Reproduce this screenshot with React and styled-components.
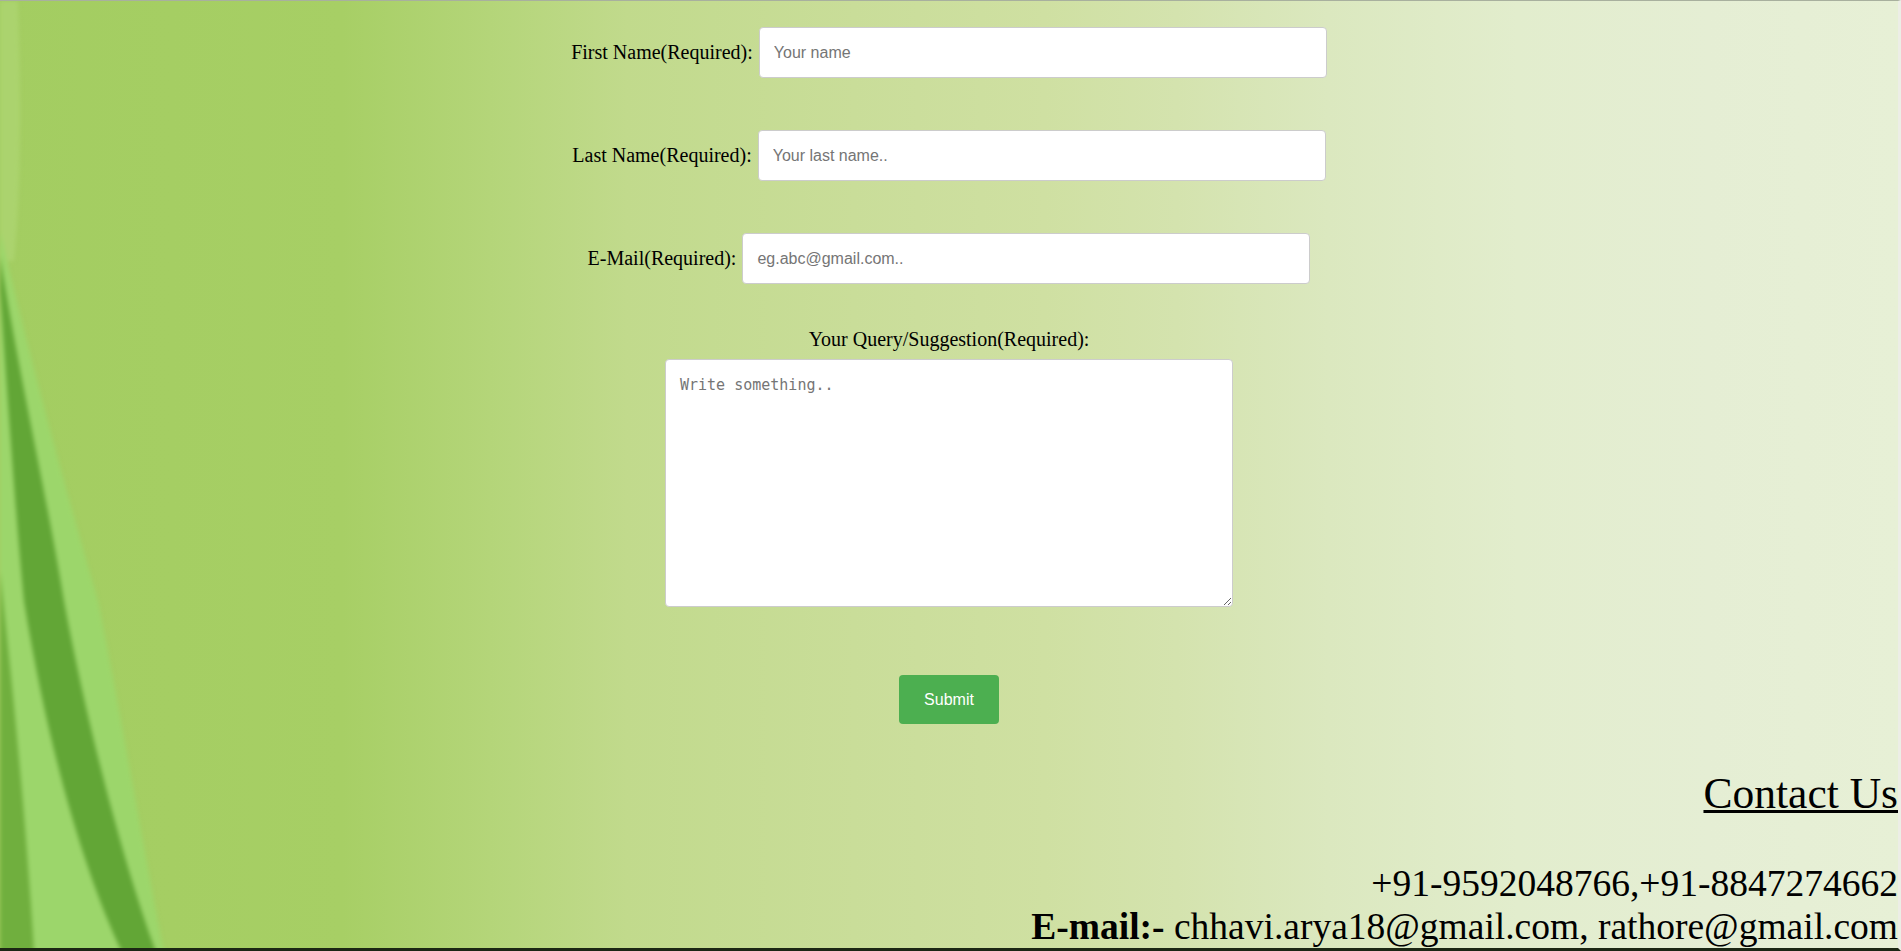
import React, { useState } from 'react';
import styled, { createGlobalStyle } from 'styled-components';

const GlobalStyle = createGlobalStyle`
  html,
  body {
    margin: 0;
    padding: 0;
  }
  body {
    font-family: 'Liberation Serif', 'Times New Roman', serif;
    color: #000;
    overflow: hidden;
  }
`;

const fields = [
  { name: 'firstname', label: 'First Name(Required):', placeholder: 'Your name' },
  { name: 'lastname', label: 'Last Name(Required):', placeholder: 'Your last name..' },
  { name: 'email', label: 'E-Mail(Required):', placeholder: 'eg.abc@gmail.com..' },
];

const Leaves = () => (
  <LeafArt width="220" height="951" viewBox="0 0 220 951" aria-hidden="true">
    <path d="M0,0 L18,0 C22,120 20,200 14,260 L0,260 Z" fill="#abd36e" />
    <path d="M0,230 C35,380 75,520 98,600 C122,720 142,840 164,951 L0,951 Z" fill="#9cd66b" />
    <path d="M0,570 C14,700 26,820 34,951 L0,951 Z" fill="#70af3e" />
    <path
      d="M0,290 C10,430 17,530 24,600 C50,760 88,880 122,951 L156,951 C126,870 88,730 64,600 C46,490 22,390 0,255 Z"
      fill="#62a636"
    />
  </LeafArt>
);

const App = () => {
  const [values, setValues] = useState({ firstname: '', lastname: '', email: '', message: '' });

  const handleChange = (e) => {
    setValues({ ...values, [e.target.name]: e.target.value });
  };

  return (
    <Page>
      <GlobalStyle />
      <Leaves />
      <Main>
        <Form onSubmit={(e) => e.preventDefault()}>
          <Fields>
            {fields.map((f) => (
              <Row key={f.name}>
                <Label htmlFor={f.name}>{f.label}</Label>
                <TextInput
                  type="text"
                  id={f.name}
                  name={f.name}
                  placeholder={f.placeholder}
                  value={values[f.name]}
                  onChange={handleChange}
                />
              </Row>
            ))}
          </Fields>
          <QueryLabel htmlFor="message">Your Query/Suggestion(Required):</QueryLabel>
          <Message
            id="message"
            name="message"
            placeholder="Write something.."
            value={values.message}
            onChange={handleChange}
          />
          <Submit type="submit">Submit</Submit>
        </Form>
        <Contact>
          <ContactTitle>Contact Us</ContactTitle>
          <ContactLine $gap>+91-9592048766,+91-8847274662</ContactLine>
          <ContactLine>
            <b>E-mail:-</b> chhavi.arya18@gmail.com, rathore@gmail.com
          </ContactLine>
        </Contact>
      </Main>
    </Page>
  );
};

export default App;

const Page = styled.div`
  position: relative;
  height: 951px;
  box-sizing: border-box;
  overflow: hidden;
  border-top: 1px solid #a8b09e;
  border-bottom: 3px solid #1c2714;
  border-right: 3px solid #eceee6;
  background: linear-gradient(
    to right,
    #a3cd61 0%,
    #a7cf65 18%,
    #b6d67c 27%,
    #c1da8c 33%,
    #c9dd99 45%,
    #cfe0a2 55%,
    #d4e3ae 62%,
    #dbe8bf 70%,
    #e2edcd 80%,
    #e5eed4 90%,
    #e7f0d6 100%
  );
`;

const LeafArt = styled.svg`
  position: absolute;
  left: 0;
  top: 0;
  filter: blur(2px);
  pointer-events: none;
`;

const Main = styled.div`
  position: relative;
  display: flex;
  flex-direction: column;
  align-items: center;
`;

const Form = styled.form`
  display: flex;
  flex-direction: column;
  align-items: center;
  padding-top: 26px;
`;

const Fields = styled.div`
  display: flex;
  flex-direction: column;
  align-items: center;
  gap: 52px;
`;

const Row = styled.div`
  display: flex;
  align-items: center;
  gap: 6px;
`;

const Label = styled.label`
  font-size: 20px;
  white-space: nowrap;
`;

const TextInput = styled.input`
  width: 568px;
  height: 51px;
  box-sizing: border-box;
  padding: 0 14px;
  border: 1px solid #ccc;
  border-radius: 4px;
  background: #fff;
  font-family: 'Liberation Sans', Arial, sans-serif;
  font-size: 16px;
  color: #222;
  outline: none;
  &::placeholder {
    color: #757575;
  }
`;

const QueryLabel = styled.label`
  margin-top: 44px;
  font-size: 20px;
`;

const Message = styled.textarea`
  margin-top: 8px;
  width: 568px;
  height: 248px;
  box-sizing: border-box;
  padding: 16px 14px 12px;
  border: 1px solid #ccc;
  border-radius: 4px;
  background: #fff;
  font-family: 'DejaVu Sans Mono', monospace;
  font-size: 15px;
  resize: vertical;
  outline: none;
  &::placeholder {
    color: #757575;
  }
`;

const Submit = styled.button`
  margin-top: 68px;
  width: 100px;
  height: 49px;
  border: none;
  border-radius: 4px;
  background: #4caf50;
  color: #fff;
  font-family: 'Liberation Sans', Arial, sans-serif;
  font-size: 16px;
  cursor: pointer;
`;

const Contact = styled.div`
  align-self: stretch;
  margin-top: 44px;
  text-align: right;
`;

const ContactTitle = styled.div`
  font-size: 43.5px;
  text-decoration: underline;
  text-decoration-thickness: 3px;
`;

const ContactLine = styled.div`
  margin-top: ${({ $gap }) => ($gap ? '44px' : '0')};
  font-size: 37.5px;
  white-space: nowrap;
`;
